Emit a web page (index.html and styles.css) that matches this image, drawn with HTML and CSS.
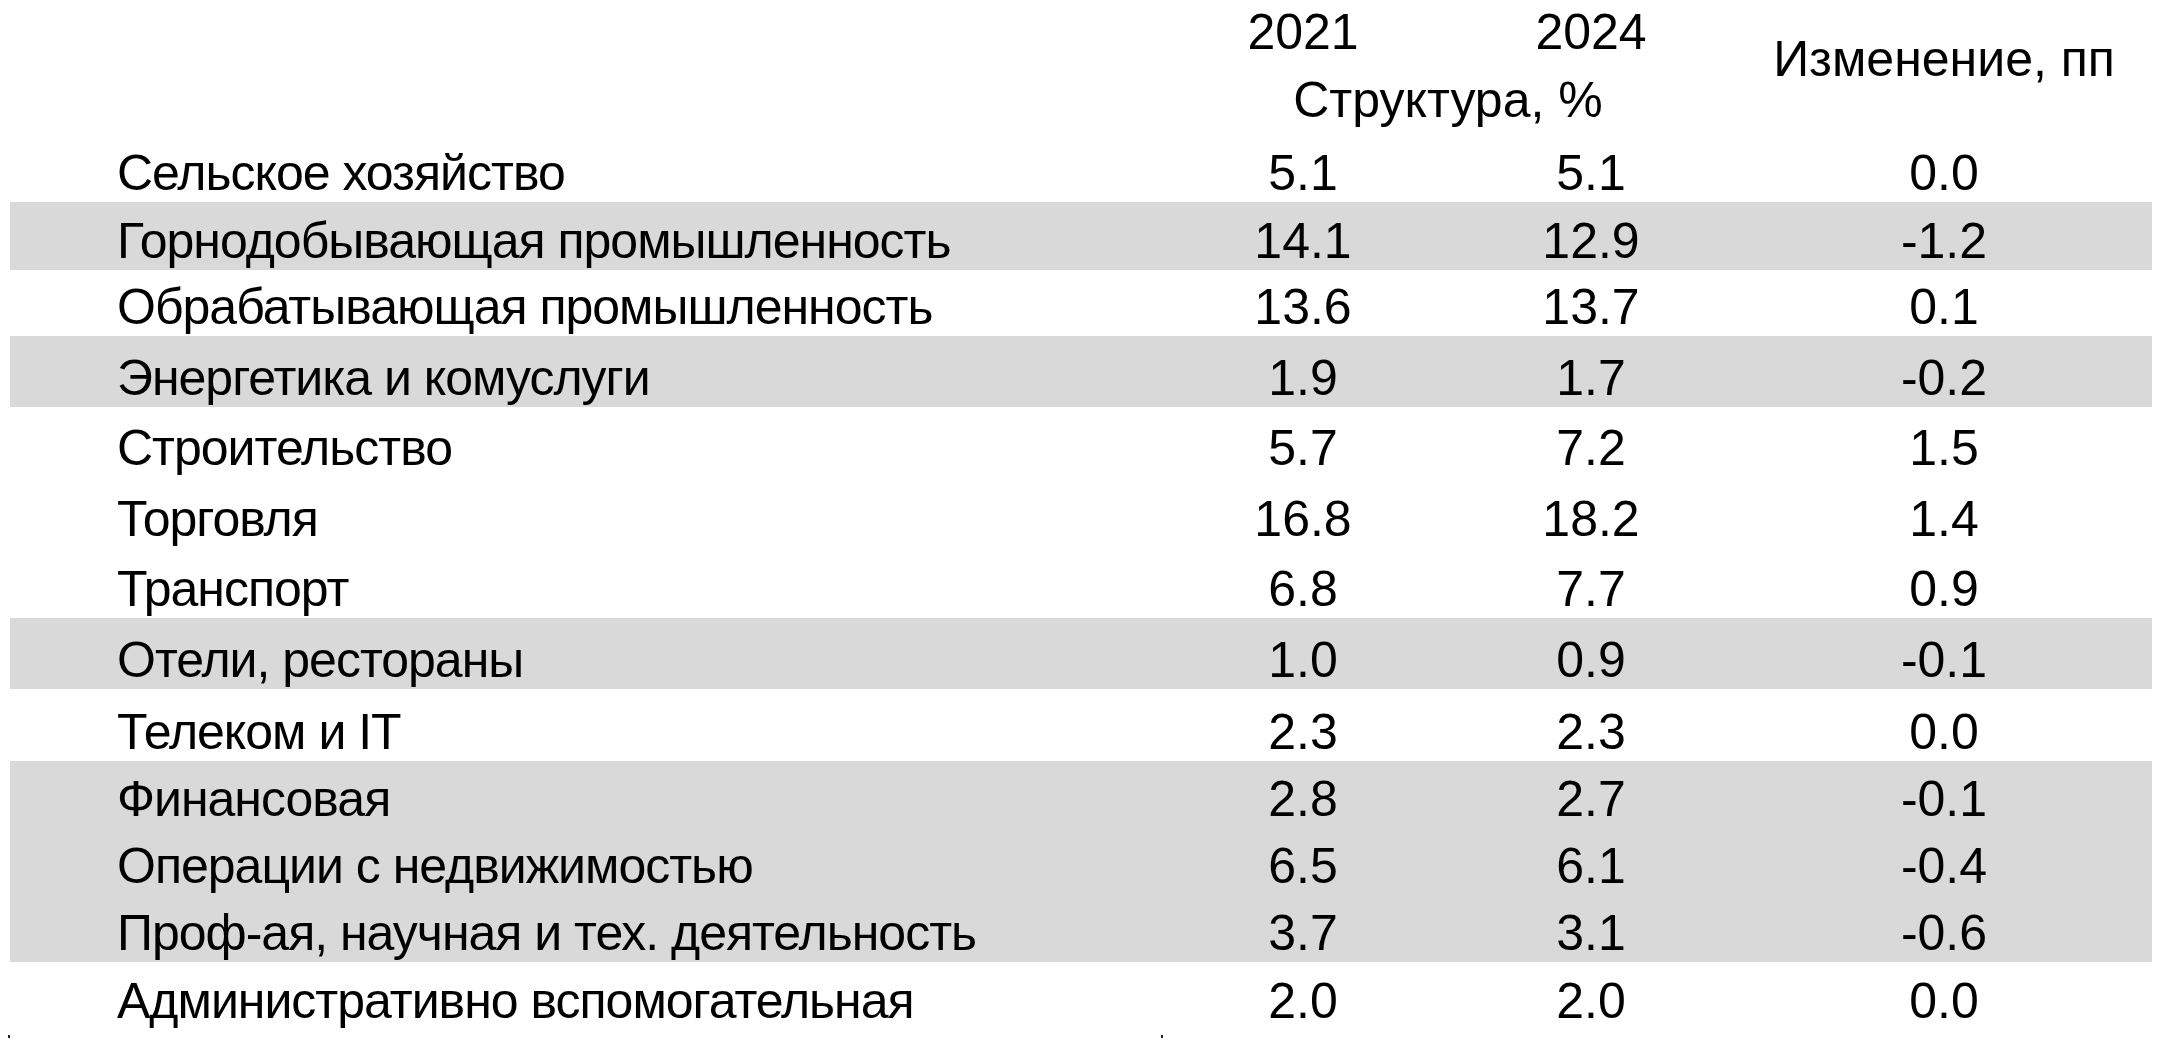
FILE: index.html
```html
<!DOCTYPE html>
<html lang="ru">
<head>
<meta charset="utf-8">
<title>Структура</title>
<link rel="stylesheet" href="styles.css">
</head>
<body>
<table class="tbl">
  <colgroup>
    <col class="c-label">
    <col class="c-y1">
    <col class="c-y2">
    <col class="c-chg">
  </colgroup>
  <thead>
    <tr class="hr1">
      <th class="label" rowspan="2"></th>
      <th class="year">2021</th>
      <th class="year">2024</th>
      <th class="chg-head" rowspan="2">Изменение, пп</th>
    </tr>
    <tr class="hr2">
      <th class="struct" colspan="2">Структура, %</th>
    </tr>
  </thead>
  <tbody>
    <tr class="h68"><td class="label">Сельское хозяйство</td><td>5.1</td><td>5.1</td><td>0.0</td></tr>
    <tr class="h68 shade"><td class="label">Горнодобывающая промышленность</td><td>14.1</td><td>12.9</td><td>-1.2</td></tr>
    <tr class="h66"><td class="label">Обрабатывающая промышленность</td><td>13.6</td><td>13.7</td><td>0.1</td></tr>
    <tr class="h71 shade"><td class="label">Энергетика и комуслуги</td><td>1.9</td><td>1.7</td><td>-0.2</td></tr>
    <tr class="h70"><td class="label">Строительство</td><td>5.7</td><td>7.2</td><td>1.5</td></tr>
    <tr class="h71"><td class="label">Торговля</td><td>16.8</td><td>18.2</td><td>1.4</td></tr>
    <tr class="h70"><td class="label">Транспорт</td><td>6.8</td><td>7.7</td><td>0.9</td></tr>
    <tr class="h71 shade"><td class="label">Отели, рестораны</td><td>1.0</td><td>0.9</td><td>-0.1</td></tr>
    <tr class="h72"><td class="label">Телеком и IT</td><td>2.3</td><td>2.3</td><td>0.0</td></tr>
    <tr class="h67 shade"><td class="label">Финансовая</td><td>2.8</td><td>2.7</td><td>-0.1</td></tr>
    <tr class="h67 shade"><td class="label">Операции с недвижимостью</td><td>6.5</td><td>6.1</td><td>-0.4</td></tr>
    <tr class="h67 shade"><td class="label">Проф-ая, научная и тех. деятельность</td><td>3.7</td><td>3.1</td><td>-0.6</td></tr>
    <tr class="h68"><td class="label">Административно вспомогательная</td><td>2.0</td><td>2.0</td><td>0.0</td></tr>
  </tbody>
</table>
<div class="marks"><span class="dot dot-a"></span><span class="dot dot-b"></span></div>
</body>
</html>
```
FILE: styles.css
```css
html, body {
  margin: 0;
  padding: 0;
  background: #ffffff;
}
body {
  width: 2160px;
  height: 1043px;
  overflow: hidden;
  font-family: "Liberation Sans", Arial, sans-serif;
  color: #000;
}
.tbl {
  margin-left: 10px;
  width: 2142px;
  table-layout: fixed;
  border-collapse: collapse;
  border-spacing: 0;
  font-size: 50px;
  line-height: 1;
}
.c-label { width: 1150px; }
.c-y1 { width: 286px; }
.c-y2 { width: 290px; }
.c-chg { width: 416px; }

.tbl th, .tbl td {
  padding: 0 0 4px 0;
  font-weight: normal;
  text-align: center;
  vertical-align: bottom;
  white-space: nowrap;
}
.tbl td.label, .tbl th.label {
  text-align: left;
  padding-left: 107px;
  letter-spacing: -1px;
}
.hr1 { height: 67px; }
.hr2 { height: 67px; }
.tbl .hr1 .year { padding-bottom: 10px; }
.tbl .hr2 .struct { padding-bottom: 9px; }
.tbl .chg-head {
  vertical-align: top;
  padding: 34px 0 0 0;
}

.h66 { height: 66px; }
.h67 { height: 67px; }
.h68 { height: 68px; }
.h70 { height: 70px; }
.h71 { height: 71px; }
.h72 { height: 72px; }

.shade td { background: #d9d9d9; }

.marks {
  display: flex;
  height: 13px;
  align-items: center;
}
.dot {
  display: block;
  width: 2px;
  height: 3px;
  background: #222;
}
.dot-a { margin-left: 8px; }
.dot-b { margin-left: 1151px; }
```
